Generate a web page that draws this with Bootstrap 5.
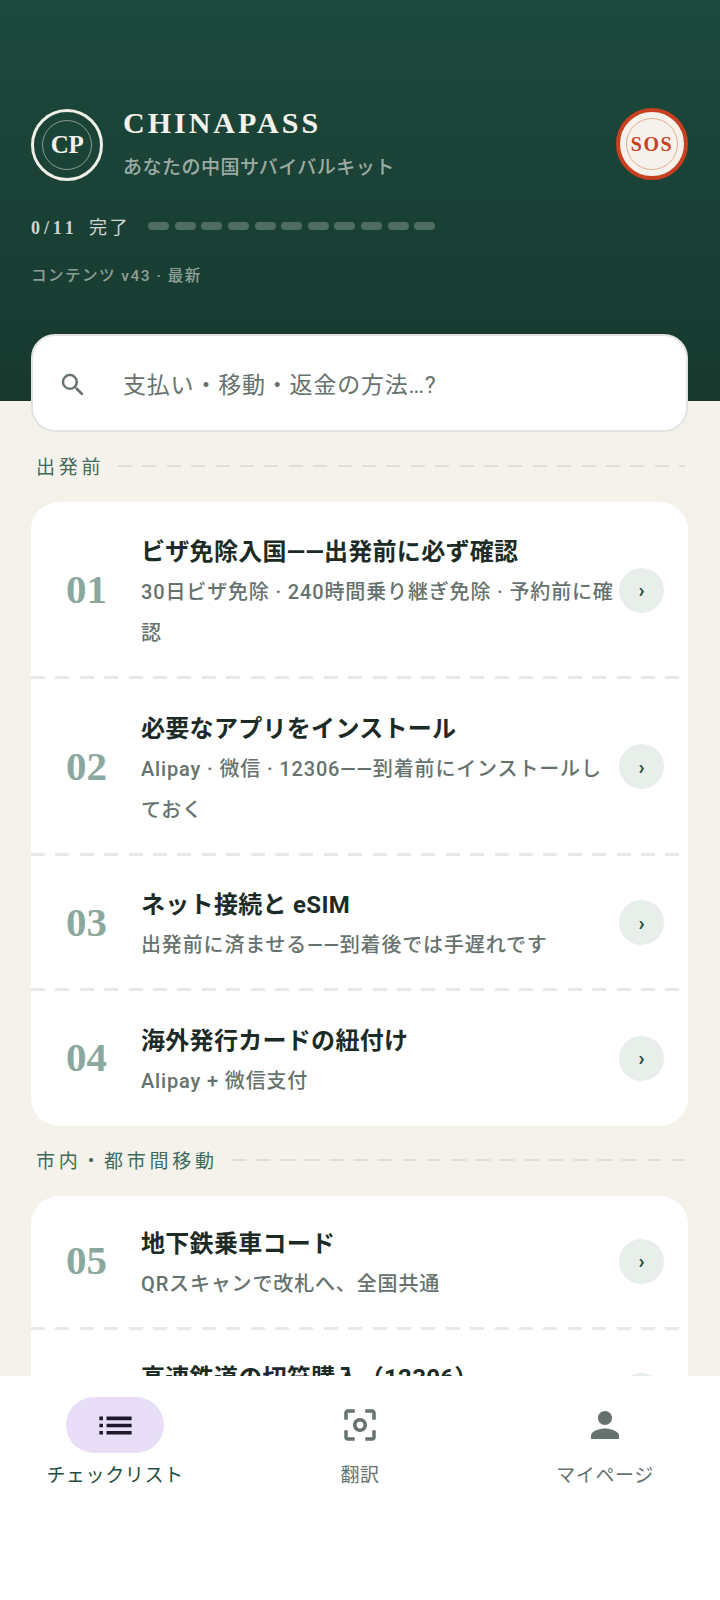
<!DOCTYPE html>
<html lang="ja">
<head>
  <meta charset="UTF-8" />
  <title>ChinaPass</title>
  <meta name="viewport" content="width=device-width, initial-scale=1" />
  <link href="https://cdn.jsdelivr.net/npm/bootstrap@5.3.3/dist/css/bootstrap.min.css" rel="stylesheet">
  <style>
    body {
      font-family: Roboto, "Noto Sans CJK JP", sans-serif;
      background: #f5f2eb;
      color: #1c2b26;
    }

    .app-frame {
      height: 1600px;
      overflow: hidden;
    }

    .hero {
      height: 401px;
      padding: 107px 32px 0 31px;
      background: linear-gradient(180deg, #1d493d 0%, #17392f 100%);
    }

    .seal {
      width: 72px;
      height: 72px;
      border: 3px solid #f0efe7;
      color: #f5f2eb;
      font-family: "Liberation Serif", serif;
      font-weight: 700;
      font-size: 25px;
      letter-spacing: -.5px;
      margin-top: 2px;
    }

    .seal-ring {
      width: 50px;
      height: 50px;
      border: 1.5px solid rgba(245, 242, 235, .5);
    }

    .brand-name {
      font-family: "Liberation Serif", serif;
      font-weight: 700;
      font-size: 30px;
      letter-spacing: 3px;
      line-height: 36px;
      margin-top: -2px;
      color: #f5f2eb;
    }

    .brand-sub {
      font-size: 19px;
      font-weight: 500;
      letter-spacing: .5px;
      line-height: 28px;
      margin-top: 13px;
      color: rgba(245, 242, 235, .62);
    }

    .brand-text {
      margin-left: 20px;
    }

    .sos-seal {
      width: 72px;
      height: 72px;
      margin-top: 1px;
      border: 4px solid #c8401f;
      background: #f5f2eb;
      color: #c8401f;
      font-family: "Liberation Serif", serif;
      font-weight: 700;
      font-size: 20px;
      letter-spacing: 1.5px;
    }

    .sos-ring {
      width: 52px;
      height: 52px;
      border: 1.5px solid rgba(200, 64, 31, .4);
    }

    .progress-row {
      margin-top: 31px;
    }

    .progress-label {
      font-family: "Liberation Serif", "Noto Sans CJK JP", serif;
      font-size: 18px;
      font-weight: 700;
      letter-spacing: 3.9px;
      margin-right: 18px;
      color: rgba(245, 242, 235, .85);
    }

    .progress-done {
      font-family: "Noto Sans CJK JP", sans-serif;
      font-weight: 400;
      letter-spacing: 2.6px;
      margin-left: 3px;
    }

    .step-track {
      gap: 5.6px;
      margin-top: -3px;
    }

    .step-pill {
      width: 21px;
      height: 8px;
      border-radius: 4px;
      background: rgba(245, 242, 235, .25);
    }

    .content-note {
      font-size: 15.5px;
      font-weight: 500;
      letter-spacing: 1.5px;
      color: rgba(245, 242, 235, .55);
      margin-top: 23px;
    }

    .search-box {
      height: 98px;
      margin: -67px 32px 0 31px;
      position: relative;
      border: 2px solid #e3e4df;
      border-radius: 24px;
      background: #fff;
      padding: 3px 0 0 25px;
      font-size: 23px;
      letter-spacing: .8px;
      color: #66726d;
    }

    .search-hint {
      margin: 4px 0 0 35px;
    }

    .group-label {
      margin: 22px 32px 20px 36px;
      height: 28px;
      font-size: 19px;
      letter-spacing: 3.7px;
      color: #3f6b5c;
    }

    .group-rule {
      height: 2px;
      background: repeating-linear-gradient(90deg, #dfdfd8 0 14px, transparent 14px 24.4px);
      margin: -5px 3px 0 14px;
    }

    .check-card {
      margin: 0 32px 0 31px;
      border-radius: 28px;
      background: #fff;
    }

    #groupB .check-row {
      padding-bottom: 3px;
    }

    .check-row {
      padding: 0 24px 0 35px;
      position: relative;
    }

    .check-row:not(:last-child)::after {
      content: "";
      position: absolute;
      left: 0;
      right: 3px;
      bottom: -1px;
      height: 3px;
      background: repeating-linear-gradient(90deg, #e8e8e4 0 14px, transparent 14px 24.4px);
    }

    .row-num {
      width: 75px;
      flex: none;
      font-family: "Liberation Serif", serif;
      font-weight: 700;
      font-size: 41px;
      color: #8aa89d;
    }

    .row-main {
      padding-top: 6px;
    }

    .row-title {
      font-size: 24px;
      font-weight: 700;
      letter-spacing: .3px;
      line-height: 40px;
      color: #1c2b26;
    }

    .row-desc {
      font-size: 20px;
      font-weight: 500;
      letter-spacing: .85px;
      line-height: 41px;
      color: #66726d;
    }

    .row-go {
      width: 45px;
      height: 45px;
      flex: none;
      background: #e8eeea;
      color: #1f4d40;
      font-size: 20px;
      font-weight: 700;
    }

    .tab-bar {
      position: absolute;
      left: 0;
      right: 0;
      top: 1376px;
      height: 224px;
      background: #fff;
      padding-top: 21px;
    }

    .tab-item {
      width: 245px;
      flex: none;
      font-size: 19px;
      line-height: 28px;
      letter-spacing: .6px;
      color: #66726d;
    }

    .tab-icon {
      width: 98px;
      height: 56px;
      border-radius: 28px;
      margin-bottom: 9px;
    }

    .tab-item.active {
      color: #1f4d40;
    }

    .tab-item.active .tab-icon {
      background: #e8def8;
    }
  </style>
</head>
<body>
  <div class="app-frame position-relative">
    <header class="hero">
      <div class="d-flex align-items-start">
        <div class="seal rounded-circle d-flex justify-content-center align-items-center flex-shrink-0">
          <div class="seal-ring rounded-circle d-flex justify-content-center align-items-center">CP</div>
        </div>
        <div class="flex-grow-1 brand-text">
          <div class="brand-name">CHINAPASS</div>
          <div class="brand-sub">あなたの中国サバイバルキット</div>
        </div>
        <div class="sos-seal rounded-circle d-flex justify-content-center align-items-center flex-shrink-0">
          <div class="sos-ring rounded-circle d-flex justify-content-center align-items-center">SOS</div>
        </div>
      </div>
      <div class="progress-row d-flex align-items-center">
        <span class="progress-label">0/11 <span class="progress-done">完了</span></span>
        <div class="d-flex step-track" id="steps"></div>
      </div>
      <div class="content-note">コンテンツ v43 · 最新</div>
    </header>

    <div class="search-box d-flex align-items-center">
      <svg width="30" height="30" viewBox="0 0 24 24" fill="#66726d"><path d="M15.5 14h-.79l-.28-.27A6.47 6.47 0 0 0 16 9.5 6.5 6.5 0 1 0 9.5 16c1.61 0 3.09-.59 4.23-1.57l.27.28v.79l5 4.99L20.49 19l-4.99-5zm-6 0C7.01 14 5 11.99 5 9.5S7.01 5 9.5 5 14 7.01 14 9.5 11.99 14 9.5 14z"/></svg>
      <span class="search-hint">支払い・移動・返金の方法…?</span>
    </div>

    <div class="group-label d-flex align-items-center">
      <span class="flex-shrink-0">出発前</span>
      <div class="group-rule flex-grow-1"></div>
    </div>
    <div class="check-card" id="groupA"></div>

    <div class="group-label d-flex align-items-center">
      <span class="flex-shrink-0">市内・都市間移動</span>
      <div class="group-rule flex-grow-1"></div>
    </div>
    <div class="check-card" id="groupB"></div>

    <nav class="tab-bar d-flex justify-content-center">
      <div class="tab-item active d-flex flex-column align-items-center">
        <div class="tab-icon d-flex justify-content-center align-items-center">
          <svg width="43" height="43" viewBox="0 0 24 24" fill="#1d192b"><path d="M3 13h2v-2H3v2zm0 4h2v-2H3v2zm0-8h2V7H3v2zm4 4h14v-2H7v2zm0 4h14v-2H7v2zM7 7v2h14V7H7z"/></svg>
        </div>
        チェックリスト
      </div>
      <div class="tab-item d-flex flex-column align-items-center">
        <div class="tab-icon d-flex justify-content-center align-items-center">
          <svg width="42" height="42" viewBox="0 0 24 24" fill="#66726d"><path d="M5 15H3v4c0 1.1.9 2 2 2h4v-2H5v-4zM5 5h4V3H5c-1.1 0-2 .9-2 2v4h2V5zm14-2h-4v2h4v4h2V5c0-1.1-.9-2-2-2zm0 16h-4v2h4c1.1 0 2-.9 2-2v-4h-2v4zM12 8c-2.21 0-4 1.79-4 4s1.79 4 4 4 4-1.79 4-4-1.79-4-4-4zm0 6c-1.1 0-2-.9-2-2s.9-2 2-2 2 .9 2 2-.9 2-2 2z"/></svg>
        </div>
        翻訳
      </div>
      <div class="tab-item d-flex flex-column align-items-center">
        <div class="tab-icon d-flex justify-content-center align-items-center">
          <svg width="42" height="42" viewBox="0 0 24 24" fill="#66726d"><path d="M12 12c2.21 0 4-1.79 4-4s-1.79-4-4-4-4 1.79-4 4 1.79 4 4 4zm0 2c-2.67 0-8 1.34-8 4v2h16v-2c0-2.66-5.33-4-8-4z"/></svg>
        </div>
        マイページ
      </div>
    </nav>
  </div>

  <script src="https://cdn.jsdelivr.net/npm/bootstrap@5.3.3/dist/js/bootstrap.bundle.min.js"></script>
  <script>
    const groupA = [
      { num: '01', title: 'ビザ免除入国——出発前に必ず確認', desc: '30日ビザ免除 · 240時間乗り継ぎ免除 · 予約前に確認', h: 176 },
      { num: '02', title: '必要なアプリをインストール', desc: 'Alipay · 微信 · 12306——到着前にインストールしておく', h: 177 },
      { num: '03', title: 'ネット接続と eSIM', desc: '出発前に済ませる——到着後では手遅れです', h: 135 },
      { num: '04', title: '海外発行カードの紐付け', desc: 'Alipay + 微信支付', h: 136 }
    ];
    const groupB = [
      { num: '05', title: '地下鉄乗車コード', desc: 'QRスキャンで改札へ、全国共通', h: 133 },
      { num: '06', title: '高速鉄道の切符購入（12306）', desc: '駅での受け取りも可能です', h: 135 }
    ];

    function renderRows(id, rows) {
      document.getElementById(id).innerHTML = rows.map(r => `
        <div class="check-row d-flex align-items-center" style="height:${r.h}px">
          <div class="row-num">${r.num}</div>
          <div class="row-main flex-grow-1">
            <div class="row-title">${r.title}</div>
            <div class="row-desc">${r.desc}</div>
          </div>
          <div class="row-go rounded-circle d-flex justify-content-center align-items-center">›</div>
        </div>`).join('');
    }

    renderRows('groupA', groupA);
    renderRows('groupB', groupB);

    document.getElementById('steps').innerHTML = Array(11).fill('<div class="step-pill"></div>').join('');
  </script>
</body>
</html>
